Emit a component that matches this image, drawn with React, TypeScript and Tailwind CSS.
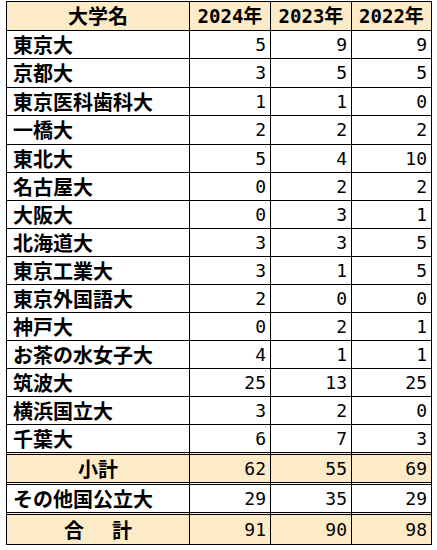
import React from "react"

type Row = { name: string; v: [string, string, string]; h: string }

const rows: Row[] = [
  { name: "東京大", v: ["5", "9", "9"], h: "h-[28px]" },
  { name: "京都大", v: ["3", "5", "5"], h: "h-[29px]" },
  { name: "東京医科歯科大", v: ["1", "1", "0"], h: "h-[28px]" },
  { name: "一橋大", v: ["2", "2", "2"], h: "h-[29px]" },
  { name: "東北大", v: ["5", "4", "10"], h: "h-[28px]" },
  { name: "名古屋大", v: ["0", "2", "2"], h: "h-[28px]" },
  { name: "大阪大", v: ["0", "3", "1"], h: "h-[28px]" },
  { name: "北海道大", v: ["3", "3", "5"], h: "h-[28px]" },
  { name: "東京工業大", v: ["3", "1", "5"], h: "h-[28px]" },
  { name: "東京外国語大", v: ["2", "0", "0"], h: "h-[28px]" },
  { name: "神戸大", v: ["0", "2", "1"], h: "h-[28px]" },
  { name: "お茶の水女子大", v: ["4", "1", "1"], h: "h-[28px]" },
  { name: "筑波大", v: ["25", "13", "25"], h: "h-[28px]" },
  { name: "横浜国立大", v: ["3", "2", "0"], h: "h-[28px]" },
  { name: "千葉大", v: ["6", "7", "3"], h: "h-[28px]" },
]

const jp = "font-['Noto_Sans_CJK_JP',sans-serif] font-bold text-[20px] leading-none"
const mono = "font-['DejaVu_Sans_Mono','Noto_Sans_CJK_JP',monospace] text-[18px] leading-none"
const widths = ["w-[81px]", "w-[81px]", "w-[80px]"]

function NumCells({ v, top }: { v: string[]; top: string }) {
  return (
    <>
      {v.map((n, i) => (
        <div
          key={i}
          className={`${widths[i]} ${top} border-l border-black flex items-center justify-end pr-[4px] ${mono}`}
        >
          {n}
        </div>
      ))}
    </>
  )
}

export default function App() {
  const dbl = "border-t-[3px] border-double border-black"
  return (
    <div className="bg-white w-[437px] h-[550px] pt-[1px] pl-[6px]">
      <div className="w-[426px] border-r border-b border-black text-black">
        {/* header */}
        <div className="flex h-[29px] bg-[#fdebc8]">
          <div className={`w-[183px] border-l border-t border-black flex items-center justify-center ${jp}`}>
            大学名
          </div>
          {["2024年", "2023年", "2022年"].map((y, i) => (
            <div
              key={y}
              className={`${widths[i]} border-l border-t border-black flex items-center justify-center font-bold ${mono.replace("text-[18px]", "text-[19px]")}`}
            >
              {y}
            </div>
          ))}
        </div>

        {rows.map((r) => (
          <div key={r.name} className={`flex ${r.h}`}>
            <div className={`w-[183px] border-l border-t border-black flex items-center pl-[6px] ${jp}`}>
              {r.name}
            </div>
            <NumCells v={r.v} top="border-t" />
          </div>
        ))}

        <div className="flex h-[30px] bg-[#fdebc8]">
          <div className={`w-[183px] border-l ${dbl} flex items-center justify-center ${jp}`}>小計</div>
          <NumCells v={["62", "55", "69"]} top={dbl} />
        </div>
        <div className="flex h-[30px]">
          <div className={`w-[183px] border-l ${dbl} flex items-center pl-[6px] ${jp}`}>その他国公立大</div>
          <NumCells v={["29", "35", "29"]} top={dbl} />
        </div>
        <div className="flex h-[32px] bg-[#fdebc8]">
          <div className={`w-[183px] border-l ${dbl} flex items-center justify-center ${jp}`}>
            合<span className="inline-block w-[28px]" />計
          </div>
          <NumCells v={["91", "90", "98"]} top={dbl} />
        </div>
      </div>
    </div>
  )
}
